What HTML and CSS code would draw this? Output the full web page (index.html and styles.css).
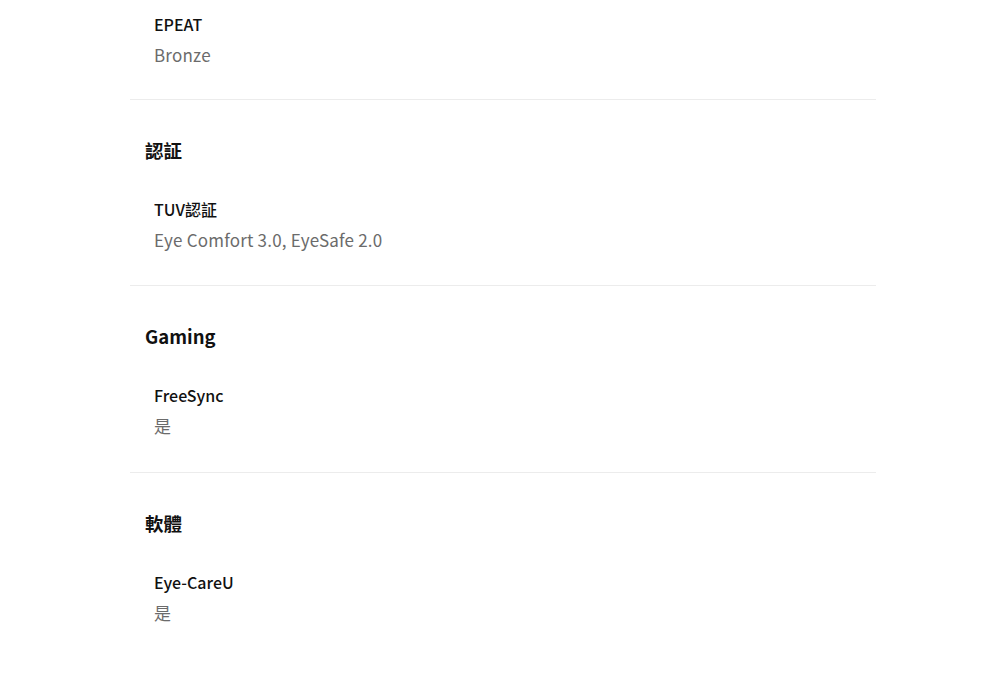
FILE: index.html
```html
<!DOCTYPE html>
<html lang="zh-TW">

<head>
  <meta charset="UTF-8">
  <meta name="viewport" content="width=device-width, initial-scale=1.0">
  <title>規格</title>
  <link rel="stylesheet" href="styles.css">
</head>

<body>
  <div class="spec-list">
    <div class="spec-group first">
      <div class="spec-item">
        <p class="spec-label">EPEAT</p>
        <p class="spec-value">Bronze</p>
      </div>
    </div>

    <div class="spec-group">
      <h3 class="spec-title">認証</h3>
      <div class="spec-item">
        <p class="spec-label">TUV認証</p>
        <p class="spec-value">Eye Comfort 3.0, EyeSafe 2.0</p>
      </div>
    </div>

    <div class="spec-group">
      <h3 class="spec-title">Gaming</h3>
      <div class="spec-item">
        <p class="spec-label">FreeSync</p>
        <p class="spec-value">是</p>
      </div>
    </div>

    <div class="spec-group">
      <h3 class="spec-title">軟體</h3>
      <div class="spec-item">
        <p class="spec-label">Eye-CareU</p>
        <p class="spec-value">是</p>
      </div>
    </div>
  </div>
</body>

</html>
```

FILE: styles.css
```css
html,
body {
  margin: 0;
  background: #fff;
  font-family: "Noto Sans CJK TC", "Noto Sans", sans-serif;
  color: #111;
}

p,
h3 {
  margin: 0;
  padding: 0;
}

.spec-list {
  width: 746px;
  margin-left: 130px;
}

.spec-group {
  border-top: 1px solid #ececec;
  padding: 35px 0 30.5px;
}

.spec-group.first {
  border-top: none;
  padding: 9px 0 28.5px;
}

.spec-title {
  padding-left: 15px;
  font-size: 18.5px;
  font-weight: 700;
  line-height: 30px;
}

.spec-item {
  padding-left: 24px;
  margin-top: 29px;
}

.spec-group.first .spec-item {
  margin-top: 0;
}

.spec-label {
  font-size: 16px;
  font-weight: 500;
  line-height: 30px;
}

.spec-value {
  margin-top: 1px;
  font-size: 17px;
  letter-spacing: 0.2px;
  line-height: 30px;
  color: #6b6b6b;
}
```
